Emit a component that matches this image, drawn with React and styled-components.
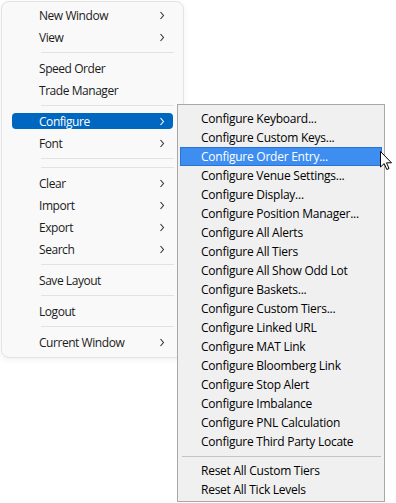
import React from "react";
import styled, { createGlobalStyle } from "styled-components";

const GlobalStyle = createGlobalStyle`
  html, body {
    margin: 0;
    padding: 0;
    background: #ffffff;
  }
  body {
    font-family: "Segoe UI", "Open Sans", "Noto Sans", sans-serif;
  }
`;

const Stage = styled.div`
  position: relative;
  width: 396px;
  height: 503px;
  padding: 1px 0 0 1px;
  box-sizing: border-box;
  overflow: hidden;
`;

const MainMenu = styled.div`
  width: 183px;
  box-sizing: border-box;
  padding: 2px 0 4px;
  background: #f9f9f9;
  border: 1px solid #e3e3e3;
  border-radius: 8px;
  box-shadow: 0 2px 6px rgba(0, 0, 0, 0.06);
  display: flex;
  flex-direction: column;
`;

const MainItem = styled.div`
  height: 22px;
  display: flex;
  align-items: center;
  padding: 0 10px;
`;

const MainInner = styled.div`
  flex: 1;
  height: 16px;
  display: flex;
  align-items: center;
  justify-content: space-between;
  padding: 0 8px 0 27px;
  border-radius: 4px;
  background: ${(p) => (p.$active ? "#0067c0" : "transparent")};
  color: ${(p) => (p.$active ? "#ffffff" : "#1b1b1b")};
  font-size: 12px;
  letter-spacing: -0.45px;
`;

const MainSep = styled.div`
  height: 9px;
  display: flex;
  align-items: center;
  padding: 0 9px 0 39px;

  &::after {
    content: "";
    flex: 1;
    height: 1px;
    background: #e2e2e2;
  }
`;

const Chevron = ({ color }) => (
  <svg width="6" height="9" viewBox="0 0 6 9">
    <polyline
      points="1.5,1 4.5,4.5 1.5,8"
      fill="none"
      stroke={color}
      strokeWidth="1.1"
    />
  </svg>
);

const SubMenu = styled.div`
  position: absolute;
  left: 177px;
  top: 104px;
  width: 208px;
  box-sizing: border-box;
  padding: 4px 2px 2px;
  background: #f0f0f0;
  border: 1px solid #a8a8a8;
  display: flex;
  flex-direction: column;
`;

const SubItem = styled.div`
  height: 19px;
  box-sizing: border-box;
  display: flex;
  align-items: center;
  padding-left: 20px;
  font-size: 12px;
  letter-spacing: -0.25px;
  color: ${(p) => (p.$active ? "#ffffff" : "#000000")};
  background: ${(p) => (p.$active ? "#3d8ef0" : "transparent")};
  border: 1px solid ${(p) => (p.$active ? "#2a72d4" : "transparent")};
`;

const SubSep = styled.div`
  height: 10px;
  display: flex;
  align-items: center;
  padding: 0 1px 0 2px;

  &::after {
    content: "";
    flex: 1;
    height: 1px;
    background: #c4c4c4;
  }
`;

const Cursor = styled.svg`
  position: absolute;
  left: 380px;
  top: 151px;
`;

const mainItems = [
  { label: "New Window", sub: true },
  { label: "View", sub: true },
  { sep: true },
  { label: "Speed Order" },
  { label: "Trade Manager" },
  { sep: true },
  { label: "Configure", sub: true, active: true },
  { label: "Font", sub: true },
  { sep: true },
  { sep: true },
  { label: "Clear", sub: true },
  { label: "Import", sub: true },
  { label: "Export", sub: true },
  { label: "Search", sub: true },
  { sep: true },
  { label: "Save Layout" },
  { sep: true },
  { label: "Logout" },
  { sep: true },
  { label: "Current Window", sub: true },
];

const subItems = [
  "Configure Keyboard...",
  "Configure Custom Keys...",
  "Configure Order Entry...",
  "Configure Venue Settings...",
  "Configure Display...",
  "Configure Position Manager...",
  "Configure All Alerts",
  "Configure All Tiers",
  "Configure All Show Odd Lot",
  "Configure Baskets...",
  "Configure Custom Tiers...",
  "Configure Linked URL",
  "Configure MAT Link",
  "Configure Bloomberg Link",
  "Configure Stop Alert",
  "Configure Imbalance",
  "Configure PNL Calculation",
  "Configure Third Party Locate",
  null,
  "Reset All Custom Tiers",
  "Reset All Tick Levels",
];

const App = () => (
  <Stage>
    <GlobalStyle />
    <MainMenu>
      {mainItems.map((it, i) =>
        it.sep ? (
          <MainSep key={i} />
        ) : (
          <MainItem key={i}>
            <MainInner $active={it.active}>
              <span>{it.label}</span>
              {it.sub && <Chevron color={it.active ? "#ffffff" : "#333333"} />}
            </MainInner>
          </MainItem>
        )
      )}
    </MainMenu>
    <SubMenu>
      {subItems.map((label, i) =>
        label === null ? (
          <SubSep key={i} />
        ) : (
          <SubItem key={i} $active={i === 2}>
            {label}
          </SubItem>
        )
      )}
    </SubMenu>
    <Cursor width="13" height="20" viewBox="0 0 13 20">
      <path
        d="M0.5,0.5 L0.5,16 L4.2,12.6 L6.8,18.5 L9,17.5 L6.5,11.8 L11.5,11.8 Z"
        fill="#ffffff"
        stroke="#000000"
        strokeWidth="1"
        strokeLinejoin="round"
      />
    </Cursor>
  </Stage>
);

export default App;
